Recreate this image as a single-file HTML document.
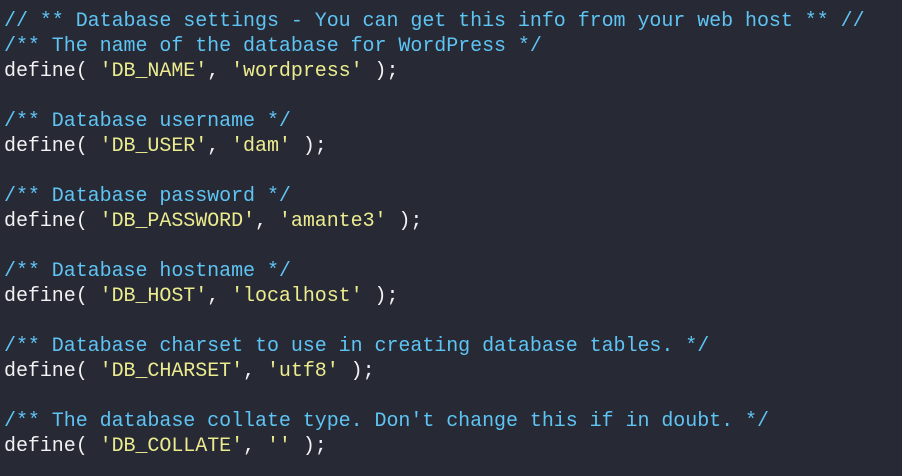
<!DOCTYPE html>
<html><head><meta charset="utf-8"><style>
html,body{margin:0;padding:0;background:#272935;width:902px;height:476px;overflow:hidden}
pre{margin:0;padding:9px 0 0 4px;font-family:"Liberation Mono","DejaVu Sans Mono",monospace;font-size:20px;letter-spacing:-0.05px;line-height:25px;color:#f2f2f2;white-space:pre}
.c{color:#5ec4f3}.s{color:#ecec8f}
</style></head><body><pre><span class="c">// ** Database settings - You can get this info from your web host ** //</span>
<span class="c">/** The name of the database for WordPress */</span>
define( <span class="s">'DB_NAME'</span>, <span class="s">'wordpress'</span> );

<span class="c">/** Database username */</span>
define( <span class="s">'DB_USER'</span>, <span class="s">'dam'</span> );

<span class="c">/** Database password */</span>
define( <span class="s">'DB_PASSWORD'</span>, <span class="s">'amante3'</span> );

<span class="c">/** Database hostname */</span>
define( <span class="s">'DB_HOST'</span>, <span class="s">'localhost'</span> );

<span class="c">/** Database charset to use in creating database tables. */</span>
define( <span class="s">'DB_CHARSET'</span>, <span class="s">'utf8'</span> );

<span class="c">/** The database collate type. Don't change this if in doubt. */</span>
define( <span class="s">'DB_COLLATE'</span>, <span class="s">''</span> );
</pre></body></html>
